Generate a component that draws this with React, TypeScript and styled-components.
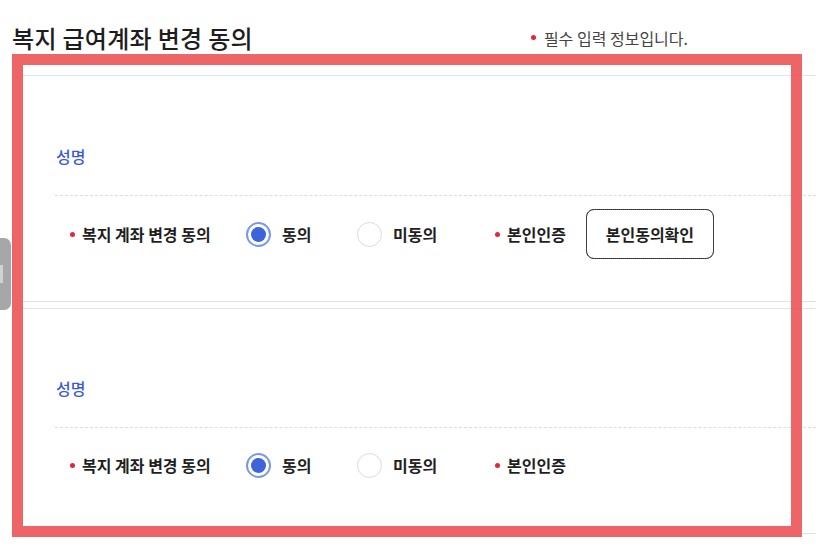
import React from "react";
import styled, { createGlobalStyle } from "styled-components";

const Global = createGlobalStyle`
  html, body { margin: 0; padding: 0; background: #ffffff; }
  body {
    font-family: "Noto Sans CJK KR", "Noto Sans", sans-serif;
    color: #222;
    overflow: hidden;
  }
  * { box-sizing: border-box; }
`;

const Page = styled.div`
  position: relative;
  width: 816px;
  height: 558px;
  overflow: hidden;
`;

const Header = styled.div`
  display: flex;
  align-items: center;
  height: 75px;
  padding: 0 128px 0 12px;
`;

const Title = styled.h2`
  margin: 0;
  font-size: 24px;
  font-weight: 500;
  line-height: 30px;
  color: #1d1d1d;
  letter-spacing: 0.3px;
`;

const RequiredNote = styled.p`
  margin: 0 0 0 auto;
  display: flex;
  align-items: center;
  gap: 8px;
  font-size: 16px;
  line-height: 20px;
  color: #444;
`;

const Dot = styled.span`
  display: inline-block;
  width: 5px;
  height: 5px;
  border-radius: 50%;
  background: #e0283a;
  flex: none;
`;

const Card = styled.section<{ $top: number; $bottom: number }>`
  margin: 0 0 0 12px;
  width: 900px;
  border: 1px solid #e3e3e3;
  border-radius: 10px;
  padding: ${(p) => p.$top}px 0 ${(p) => p.$bottom}px 42px;
  & + & {
    margin-top: 6px;
  }
`;

const NameBlock = styled.div<{ $gap: number }>`
  padding: 0 0 ${(p) => p.$gap}px 1px;
  border-bottom: 1px dashed #dcdcdc;
  font-size: 16px;
  line-height: 20px;
`;

const NameLabel = styled.span`
  display: block;
  font-size: 16px;
  font-weight: 500;
  line-height: 20px;
  color: #3b5bd6;
`;

const Row = styled.div<{ $gap: number }>`
  display: flex;
  align-items: center;
  height: 50px;
  margin-top: ${(p) => p.$gap}px;
  padding-left: 15px;
`;

const FieldLabel = styled.span<{ $width?: number }>`
  display: flex;
  align-items: center;
  gap: 7px;
  width: ${(p) => (p.$width ? `${p.$width}px` : "auto")};
  flex: none;
  font-size: 16px;
  font-weight: 700;
  color: #1f1f1f;
  white-space: nowrap;
`;

const Option = styled.label<{ $width: number }>`
  display: flex;
  align-items: center;
  gap: 11px;
  width: ${(p) => p.$width}px;
  flex: none;
  font-size: 16px;
  font-weight: 700;
  color: #222;
  white-space: nowrap;
`;

const Radio = styled.span<{ $checked?: boolean }>`
  position: relative;
  width: 25px;
  height: 25px;
  border-radius: 50%;
  flex: none;
  border: ${(p) => (p.$checked ? "2px solid #7897ee" : "1.5px solid #dcdcdc")};
  background: #fff;
  &::after {
    content: "";
    display: ${(p) => (p.$checked ? "block" : "none")};
    position: absolute;
    left: 50%;
    top: 50%;
    width: 15px;
    height: 15px;
    margin: -7.5px 0 0 -7.5px;
    border-radius: 50%;
    background: #3d63dd;
  }
`;

const AuthGroup = styled.div`
  display: flex;
  align-items: center;
  gap: 20px;
`;

const ConfirmButton = styled.button`
  width: 128px;
  height: 50px;
  border: 1px solid #2a2a2a;
  border-radius: 8px;
  background: #fff;
  font-family: inherit;
  font-size: 16px;
  font-weight: 700;
  color: #1f1f1f;
  outline: 1px dotted #555;
  outline-offset: -1px;
  cursor: pointer;
`;

const SideTab = styled.div`
  position: absolute;
  left: 0;
  top: 238px;
  width: 11px;
  height: 72px;
  background: #a7a7a7;
  border-radius: 0 7px 7px 0;
  &::after {
    content: "";
    position: absolute;
    left: 0;
    top: 27px;
    width: 3px;
    height: 18px;
    background: #d2d2d2;
  }
`;

const Highlight = styled.div`
  position: absolute;
  left: 12px;
  top: 54px;
  width: 790px;
  height: 483px;
  border: 11px solid rgba(236, 88, 90, 0.92);
  pointer-events: none;
`;

type Entry = { top: number; gap: number; rowGap: number; bottom: number; button: boolean };

const entries: Entry[] = [
  { top: 70, gap: 29, rowGap: 13, bottom: 42, button: true },
  { top: 69, gap: 29, rowGap: 12, bottom: 43, button: false },
];

export default function App() {
  return (
    <Page>
      <Global />
      <Header>
        <Title>복지 급여계좌 변경 동의</Title>
        <RequiredNote>
          <Dot />
          필수 입력 정보입니다.
        </RequiredNote>
      </Header>
      {entries.map((e, i) => (
        <Card key={i} $top={e.top} $bottom={e.bottom}>
          <NameBlock $gap={e.gap}>
            <NameLabel>성명</NameLabel>
          </NameBlock>
          <Row $gap={e.rowGap}>
            <FieldLabel $width={176}>
              <Dot />
              복지 계좌 변경 동의
            </FieldLabel>
            <Option $width={111}>
              <Radio $checked />
              동의
            </Option>
            <Option $width={138}>
              <Radio />
              미동의
            </Option>
            <AuthGroup>
              <FieldLabel>
                <Dot />
                본인인증
              </FieldLabel>
              {e.button && <ConfirmButton>본인동의확인</ConfirmButton>}
            </AuthGroup>
          </Row>
        </Card>
      ))}
      <SideTab />
      <Highlight />
    </Page>
  );
}
